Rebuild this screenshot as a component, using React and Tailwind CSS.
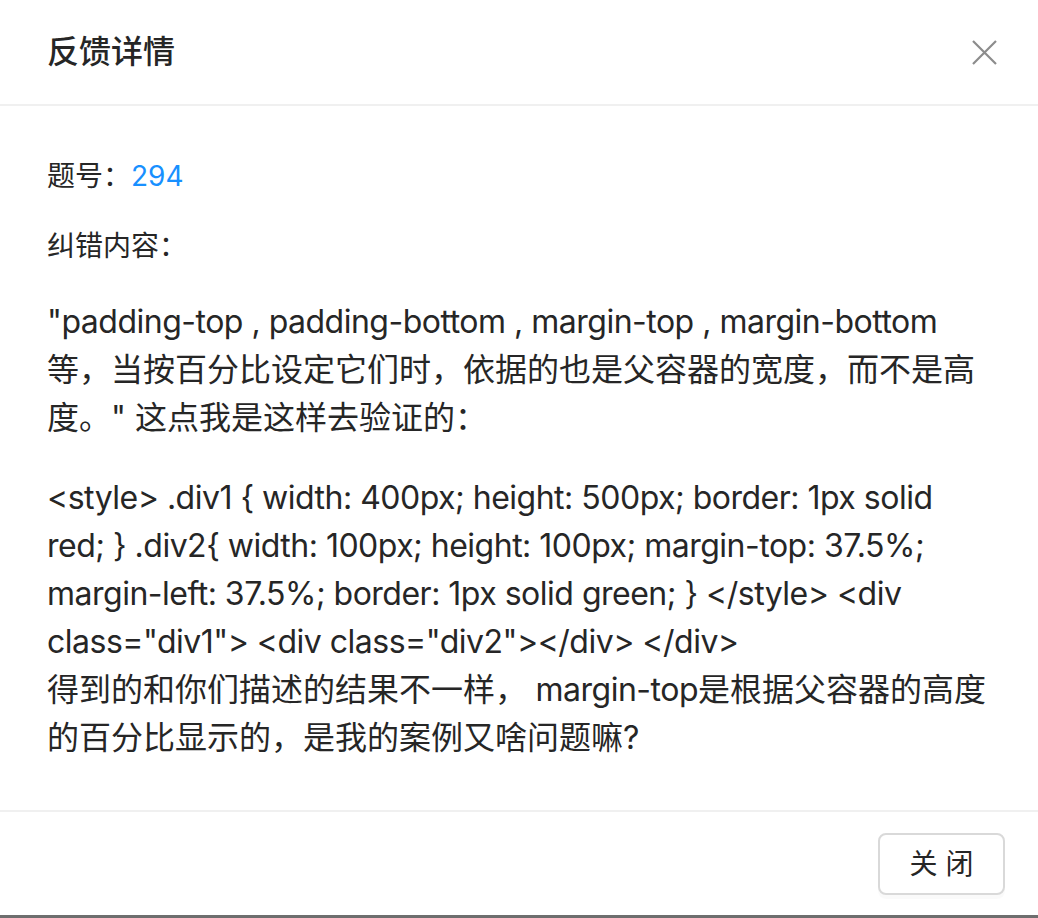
export default function App() {
  return (
    <div className="w-[1038px] h-[918px] flex flex-col bg-[#777777] font-['Inter','Noto_Sans_CJK_SC',sans-serif] text-[#262626] overflow-hidden">
      <div className="bg-white flex flex-col h-[915px] shrink-0">
        {/* Header */}
        <div className="h-[106px] shrink-0 flex items-center justify-between pl-[47px] pr-[41px] border-b-2 border-[#f0f0f0]">
          <h2 className="text-[32px] font-medium leading-[44px]">反馈详情</h2>
          <button className="w-[25px] h-[25px] flex items-center justify-center">
            <svg width="25" height="25" viewBox="0 0 25 25">
              <path d="M1 1 L24 24 M24 1 L1 24" stroke="#8c8c8c" strokeWidth="2.2" fill="none" />
            </svg>
          </button>
        </div>

        {/* Body */}
        <div className="flex-1 px-[47px] pt-12 pb-12">
          <div className="text-[28px] leading-[44px] mb-[26px]">
            题号：<span className="text-[#1890ff]">294</span>
          </div>
          <div className="text-[28px] leading-[44px]">纠错内容：</div>
          <p className="mt-[30px] text-[32px] leading-[48px]">
            <span className="tracking-[-0.5px]">"padding-top , padding-bottom , margin-top , margin-bottom </span>
            等，当按百分比设定它们时，依据的也是父容器的宽度，而不是高度。" 这点我是这样去验证的：
          </p>
          <p className="mt-[32px] text-[32px] leading-[48px]">
            <span className="tracking-[-0.5px]">
              {'<style> .div1 { width: 400px; height: 500px; border: 1px solid red; } .div2{ width: 100px; height: 100px; margin-top: 37.5%; margin-left: 37.5%; border: 1px solid green; } </style> <div class="div1"> <div class="div2"></div> </div>'}
            </span>
            <br />
            得到的和你们描述的结果不一样，<span className="tracking-[-0.5px]"> margin-top</span>是根据父容器的高度的百分比显示的，是我的案例又啥问题嘛?
          </p>
        </div>

        {/* Footer */}
        <div className="h-[105px] shrink-0 border-t-2 border-[#f0f0f0] flex items-start justify-end pt-[21px] pr-[33px]">
          <button className="w-[127px] h-[62px] border-2 border-[#d9d9d9] rounded-lg bg-white text-[28px] text-[#262626] shadow-[0_4px_0_rgba(0,0,0,0.02)]">
            关 闭
          </button>
        </div>
      </div>
      <div className="h-[3px] bg-[#6e6e6e]" />
    </div>
  )
}
